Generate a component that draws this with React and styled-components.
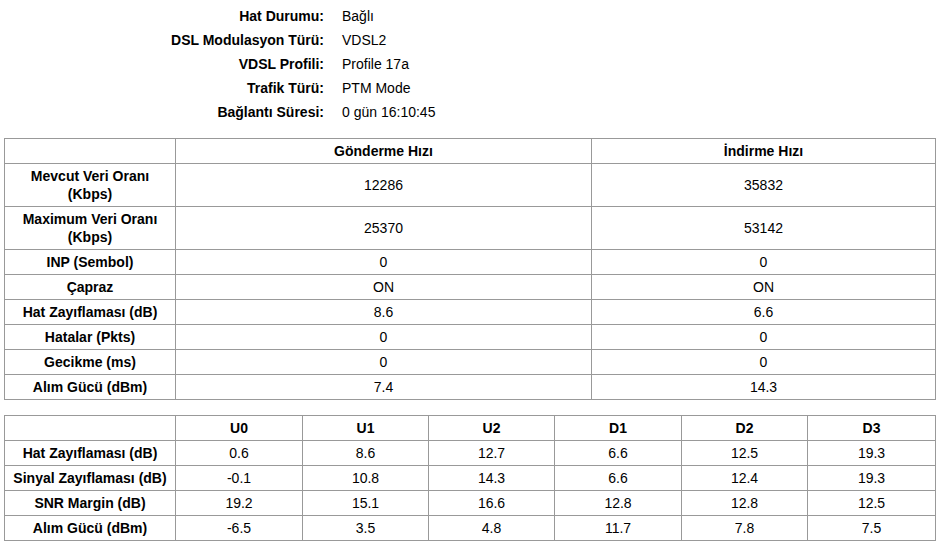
import React from "react";
import styled, { createGlobalStyle } from "styled-components";

const Global = createGlobalStyle`
  html, body { margin: 0; padding: 0; background: #fff; }
  body {
    font-family: "Liberation Sans", Arial, sans-serif;
    font-size: 14px;
    color: #000;
  }
`;

const Page = styled.div`
  padding: 4px 0 0 4px;
  width: 931px;
`;

const Info = styled.dl`
  margin: 0;
  display: grid;
  grid-template-columns: 320px auto;
  column-gap: 18px;
  grid-auto-rows: 24px;
  line-height: 24px;
`;

const InfoLabel = styled.dt`
  margin: 0;
  text-align: right;
  font-weight: bold;
`;

const InfoValue = styled.dd`
  margin: 0;
`;

const Table = styled.table`
  border-collapse: collapse;
  table-layout: fixed;
  width: 931px;
  margin-top: ${(p) => p.$top}px;
  line-height: 18px;
`;

const Col = styled.col`
  width: ${(p) => p.$w}px;
`;

const Cell = styled.td`
  border: 1px solid #999;
  padding: 3px 2px;
  text-align: center;
  font-weight: ${(p) => (p.$bold ? "bold" : "normal")};
`;

const info = [
  ["Hat Durumu:", "Bağlı"],
  ["DSL Modulasyon Türü:", "VDSL2"],
  ["VDSL Profili:", "Profile 17a"],
  ["Trafik Türü:", "PTM Mode"],
  ["Bağlantı Süresi:", "0 gün 16:10:45"],
];

const rates = [
  [["Mevcut Veri Oranı", "(Kbps)"], "12286", "35832"],
  [["Maximum Veri Oranı", "(Kbps)"], "25370", "53142"],
  [["INP (Sembol)"], "0", "0"],
  [["Çapraz"], "ON", "ON"],
  [["Hat Zayıflaması (dB)"], "8.6", "6.6"],
  [["Hatalar (Pkts)"], "0", "0"],
  [["Gecikme (ms)"], "0", "0"],
  [["Alım Gücü (dBm)"], "7.4", "14.3"],
];

const rateCols = [171, 416, 344];
const bandCols = [171, 127, 126, 126, 127, 126, 128];

const bands = ["U0", "U1", "U2", "D1", "D2", "D3"];
const bandRows = [
  ["Hat Zayıflaması (dB)", "0.6", "8.6", "12.7", "6.6", "12.5", "19.3"],
  ["Sinyal Zayıflaması (dB)", "-0.1", "10.8", "14.3", "6.6", "12.4", "19.3"],
  ["SNR Margin (dB)", "19.2", "15.1", "16.6", "12.8", "12.8", "12.5"],
  ["Alım Gücü (dBm)", "-6.5", "3.5", "4.8", "11.7", "7.8", "7.5"],
];

export default function App() {
  return (
    <>
      <Global />
      <Page>
        <Info>
          {info.map(([k, v]) => (
            <React.Fragment key={k}>
              <InfoLabel>{k}</InfoLabel>
              <InfoValue>{v}</InfoValue>
            </React.Fragment>
          ))}
        </Info>

        <Table $top={14}>
          <colgroup>
            {rateCols.map((w, i) => (
              <Col key={i} $w={w} />
            ))}
          </colgroup>
          <tbody>
            <tr>
              <Cell $bold />
              <Cell $bold>Gönderme Hızı</Cell>
              <Cell $bold>İndirme Hızı</Cell>
            </tr>
            {rates.map(([label, up, down]) => (
              <tr key={label[0]}>
                <Cell $bold>
                  {label.map((l, i) => (
                    <React.Fragment key={l}>
                      {i > 0 && <br />}
                      {l}
                    </React.Fragment>
                  ))}
                </Cell>
                <Cell>{up}</Cell>
                <Cell>{down}</Cell>
              </tr>
            ))}
          </tbody>
        </Table>

        <Table $top={15}>
          <colgroup>
            {bandCols.map((w, i) => (
              <Col key={i} $w={w} />
            ))}
          </colgroup>
          <tbody>
            <tr>
              <Cell $bold />
              {bands.map((b) => (
                <Cell $bold key={b}>{b}</Cell>
              ))}
            </tr>
            {bandRows.map(([label, ...vals]) => (
              <tr key={label}>
                <Cell $bold>{label}</Cell>
                {vals.map((v, i) => (
                  <Cell key={i}>{v}</Cell>
                ))}
              </tr>
            ))}
          </tbody>
        </Table>
      </Page>
    </>
  );
}
